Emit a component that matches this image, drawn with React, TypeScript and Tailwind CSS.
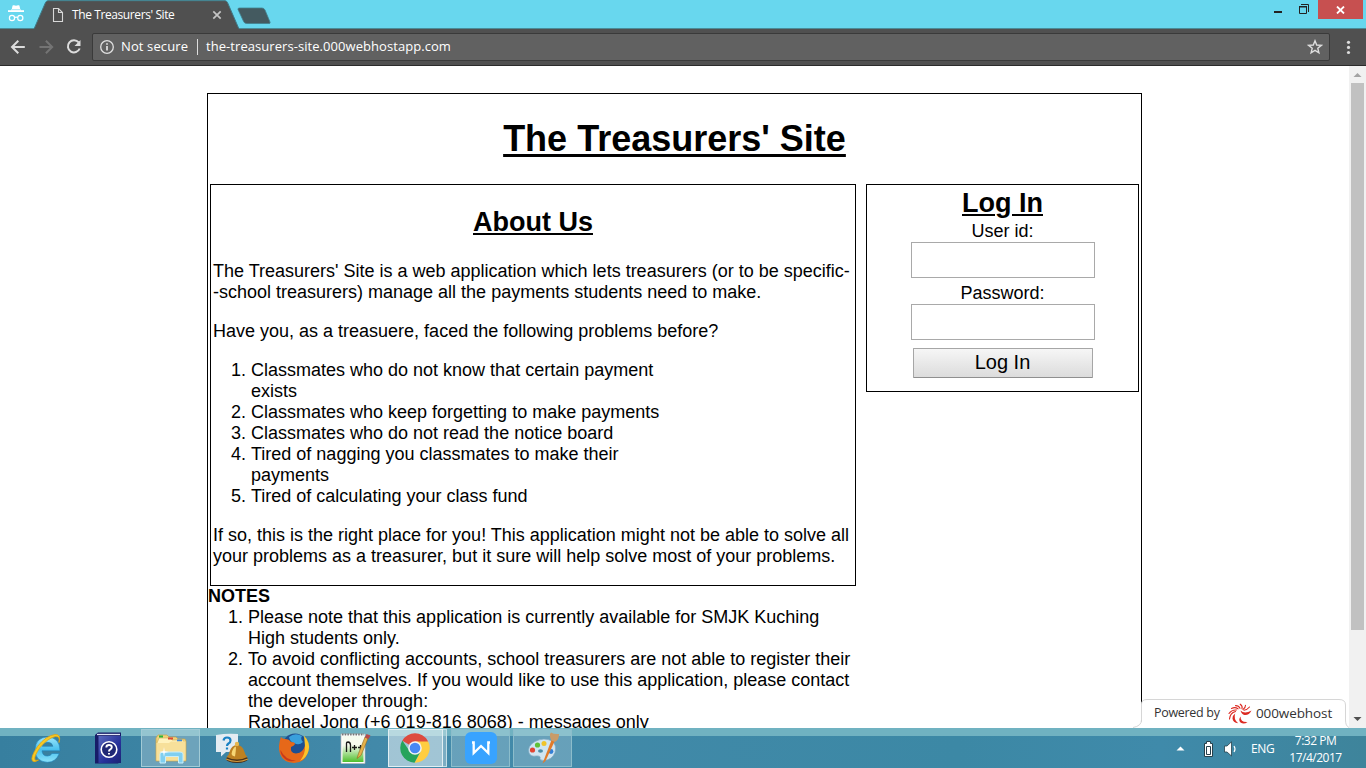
import type { ReactNode } from "react";

function Line({ children, className = "" }: { children: ReactNode; className?: string }) {
  return <span className={`block h-[21px] leading-[21px] whitespace-nowrap ${className}`}>{children}</span>;
}

function Item({ n, lines }: { n: number; lines: string[] }) {
  return (
    <li className="flex">
      <span className="w-[40px] shrink-0 pr-[5px] text-right leading-[21px]">{n}.</span>
      <div>
        {lines.map((l) => (
          <Line key={l}>{l}</Line>
        ))}
      </div>
    </li>
  );
}

function TabStrip() {
  return (
    <div className="relative flex h-[29px] bg-[linear-gradient(to_bottom,#68d7ee_28px,#4a8b98_28px)]">
      <svg className="absolute left-0 top-0" width="290" height="29" viewBox="0 0 290 29">
        <path d="M34 29 L45.500 2.500 Q46.500 .7 48 .7 H225 Q226.500 .7 227.500 2.500 L239 29Z" fill="#505050" stroke="#3f7986" strokeWidth="1" />
        <rect x="34.500" y="28" width="204" height="1" fill="#505050" />
        <path d="M239.500 8 H262 Q264 8 265 10 L270 22 Q270.500 23.500 269 23.500 H246.500 Q244.500 23.500 243.600 21.500 L238 9.500 Q237.500 8 239.500 8Z" fill="#445a60" stroke="#43808d" strokeWidth=".8" />
        <g fill="#fff">
          <path d="M11.800 9 L12.600 5.600 Q13 5 14 5.300 Q16 6.100 18 5.300 Q19 5 19.400 5.600 L20.200 9Z" />
          <path d="M8 10.200 H24 V12 H8Z" />
          <path d="M11 9.500h10v1H11z" />
        </g>
        <g fill="none" stroke="#fff" strokeWidth="1.200">
          <circle cx="12" cy="18" r="2.600" />
          <circle cx="20.300" cy="18" r="2.600" />
          <path d="M14.600 17.600 Q16.100 16.700 17.700 17.600" />
        </g>
        <path d="M53.500 8.500 H58.500 L62.500 12.500 V21.500 H53.500Z M58.500 8.500 V12.500 H62.500" fill="none" stroke="#d8d8d8" strokeWidth="1.100" />
        <path d="M213.300 11.300 L220.700 18.700 M220.700 11.300 L213.300 18.700" stroke="#c4c4c4" strokeWidth="1.700" />
      </svg>
      <span className="relative ml-[72px] mt-[6px] w-[110px] whitespace-nowrap font-['Open_Sans','Noto_Sans',sans-serif] text-[12px] leading-[18px] tracking-[-0.4px] text-white">
        The Treasurers' Site
      </span>
      <div className="ml-auto flex">
        <svg width="54" height="19" viewBox="0 0 54 19" className="shrink-0">
          <rect x="10" y="11" width="8" height="2" fill="#222" />
          <path d="M35.500 6.500 H42.500 V13.500 H35.500Z" fill="none" stroke="#222" />
          <path d="M35 6h8v1.500h-8z" fill="#222" />
          <path d="M37 4.500 H44.500 V12" fill="none" stroke="#222" />
        </svg>
        <div className="flex h-[19px] w-[45px] items-center justify-center bg-[#c75050]">
          <svg width="9" height="8" viewBox="0 0 9 8">
            <path d="M1 .5 L8 7.500 M8 .5 L1 7.500" stroke="#fff" strokeWidth="1.800" />
          </svg>
        </div>
        <div className="w-[3px]" />
      </div>
    </div>
  );
}

function Toolbar() {
  return (
    <div className="flex h-[37px] items-start border-b border-[#2b2b2b] bg-[#505050] pt-[4px] font-['Open_Sans','Noto_Sans',sans-serif] text-[13px] text-white">
      <svg width="92" height="28" viewBox="0 0 92 28" className="shrink-0" fill="none" strokeWidth="2">
        <path d="M24.800 14 H12.500 M18.300 7.700 L12 14 L18.300 20.300" stroke="#dcdcdc" />
        <path d="M39.500 14 H52 M45.900 7.700 L52.200 14 L45.900 20.300" stroke="#747474" />
        <path d="M78.700 9.400 A6.100 6.100 0 1 0 79.700 15.500" stroke="#dcdcdc" />
        <path d="M80.500 7 V13 H74.500Z" fill="#dcdcdc" />
      </svg>
      <div className="flex h-[28px] w-[1238px] items-center rounded-[2px] border border-[#3a3a3a] bg-[#616161]">
        <svg width="27" height="26" viewBox="0 0 27 26" className="shrink-0" fill="none">
          <circle cx="14" cy="13" r="6.300" stroke="#e0e0e0" strokeWidth="1.300" />
          <path d="M14 12 V16.500 M14 9.200 V10.700" stroke="#f2f2f2" strokeWidth="1.500" />
        </svg>
        <span className="ml-[1px] w-[76px] whitespace-nowrap tracking-[0.12px]">Not secure</span>
        <span className="h-[16px] w-px bg-[#ddd]" />
        <span className="ml-[8px] whitespace-nowrap tracking-[0.06px]">the-treasurers-site.000webhostapp.com</span>
        <svg width="16" height="16" viewBox="0 0 16 16" className="ml-auto mr-[6px]" fill="none">
          <path d="M8 1.800 L9.700 6 L14.300 6.400 L10.800 9.300 L11.900 13.800 L8 11.400 L4.100 13.800 L5.200 9.300 L1.700 6.400 L6.300 6Z" stroke="#dedede" strokeWidth="1.400" />
        </svg>
      </div>
      <svg width="36" height="28" viewBox="0 0 36 28" fill="#dcdcdc" className="shrink-0">
        <circle cx="18.500" cy="9.300" r="1.600" />
        <circle cx="18.500" cy="14.400" r="1.600" />
        <circle cx="18.500" cy="19.500" r="1.600" />
      </svg>
    </div>
  );
}

function Login() {
  return (
    <section className="flex h-[208px] w-[273px] flex-col items-center border border-black pt-[3px]">
      <h2 className="h-[33px] text-[27px] font-bold leading-[31px] underline decoration-[2px] underline-offset-[2px]">Log In</h2>
      <Line>User id:</Line>
      <input aria-label="User id" className="h-[36px] w-[184px] border border-[#a9a9a9] bg-white" />
      <Line className="mt-[5px]">Password:</Line>
      <input type="password" aria-label="Password" className="h-[36px] w-[184px] border border-[#a9a9a9] bg-white" />
      <button className="mt-[8px] h-[30px] w-[180px] rounded-[1px] border border-[#a6a6a6] border-b-[#8f8f8f] bg-linear-to-b from-[#f6f6f6] to-[#dcdcdc] pb-[2px] text-[20px] leading-[26px]">
        Log In
      </button>
    </section>
  );
}

function Site() {
  return (
    <div className="ml-[207px] mt-[27px] h-[700px] w-[935px] shrink-0 border border-black text-[18px] text-black">
      <h1 className="mt-[24px] h-[41px] text-center text-[36px] font-bold leading-[41px] underline decoration-[3px] underline-offset-[3px]">
        The Treasurers' Site
      </h1>
      <div className="mt-[25px] flex items-start gap-[10px] pl-[2px]">
        <section className="h-[402px] w-[646px] border border-black pl-[2px]">
          <h2 className="ml-[-2px] mt-[22px] h-[31px] text-center text-[27px] font-bold leading-[31px] underline decoration-[2px] underline-offset-[2px]">
            About Us
          </h2>
          <div className="mt-[23px]">
            <Line>The Treasurers' Site is a web application which lets treasurers (or to be specific-</Line>
            <Line>-school treasurers) manage all the payments students need to make.</Line>
          </div>
          <Line className="mt-[18px]">Have you, as a treasuere, faced the following problems before?</Line>
          <ol className="ml-[-2px] mt-[18px]">
            <Item n={1} lines={["Classmates who do not know that certain payment", "exists"]} />
            <Item n={2} lines={["Classmates who keep forgetting to make payments"]} />
            <Item n={3} lines={["Classmates who do not read the notice board"]} />
            <Item n={4} lines={["Tired of nagging you classmates to make their", "payments"]} />
            <Item n={5} lines={["Tired of calculating your class fund"]} />
          </ol>
          <div className="mt-[18px]">
            <Line>If so, this is the right place for you! This application might not be able to solve all</Line>
            <Line>your problems as a treasurer, but it sure will help solve most of your problems.</Line>
          </div>
        </section>
        <Login />
      </div>
      <Line className="font-bold">NOTES</Line>
      <ol>
        <Item n={1} lines={["Please note that this application is currently available for SMJK Kuching", "High students only."]} />
        <Item
          n={2}
          lines={[
            "To avoid conflicting accounts, school treasurers are not able to register their",
            "account themselves. If you would like to use this application, please contact",
            "the developer through:",
            "Raphael Jong (+6 019-816 8068) - messages only",
          ]}
        />
      </ol>
    </div>
  );
}

function PoweredBy() {
  return (
    <div className="absolute bottom-0 left-[1130px] flex h-[30px] w-[227px] items-center pl-[24px] pt-[1px] font-['Open_Sans','Noto_Sans',sans-serif] text-[#333]">
      <svg className="absolute left-0 top-0" width="219" height="30" viewBox="0 0 219 30">
        <path d="M0 30 Q11.500 29.500 11.500 22 V6 Q11.500 1.500 17 1.500 H209 Q215.500 1.500 215.500 7 V22 Q215.500 28 219 29.500 V30Z" fill="#fff" />
        <path d="M3 29.500 Q11.500 28 11.500 22 V6 Q11.500 1.500 17 1.500 H209 Q215.500 1.500 215.500 7 V22 Q215.500 28 219 29.500" fill="none" stroke="#d6d6d6" />
      </svg>
      <span className="relative w-[74px] whitespace-nowrap text-[12.5px] tracking-[-0.3px]">Powered by</span>
      <svg className="relative shrink-0" width="24" height="22" viewBox="0 0 24 22" fill="#dc2a22">
        <path d="M12.500 7.500 Q16.500 11.500 23.500 7.500 Q21 12.500 16.500 12 Q13.500 11.300 12.500 7.500Z" />
        <path d="M10 11.500 Q10 17.500 17 17 Q13.500 19.800 10 17.500 Q7.500 15 10 11.500Z" transform="translate(2.500 2)" />
        <path d="M7.200 10.500 Q5.200 16.500 10.200 20.300 Q4.800 19.500 4.500 15.500 Q4.600 12.300 7.200 10.500Z" />
        <g fill="none" stroke="#dc2a22" strokeWidth="1.100" strokeLinecap="round">
          <path d="M7.500 8.500 Q2 10 1.500 16" />
          <path d="M8.500 7 Q4 6.500 1 10.500" />
          <path d="M10 5.800 Q7 3.500 3.500 5.500" />
          <path d="M12 5.300 Q10.800 2.500 7.500 2.600" />
          <path d="M14 5.600 Q14.800 3 12.200 1.200" />
          <path d="M16 7.200 Q19 7 21.500 4" />
          <path d="M15 6.400 Q17.500 5 17.500 2.300" />
        </g>
      </svg>
      <span className="relative ml-[4px] whitespace-nowrap text-[13.5px] tracking-[-0.1px]">000webhost</span>
    </div>
  );
}

function Scrollbar() {
  return (
    <div className="absolute right-0 top-0 flex h-full w-[17px] flex-col items-center bg-[#f1f1f1]">
      <svg width="17" height="17" viewBox="0 0 17 17" className="shrink-0">
        <path d="M4.500 11 H12.500 L8.500 7Z" fill="#a3a3a3" />
      </svg>
      <div className="h-[547px] w-[13px] bg-[#c1c1c1]" />
      <svg width="17" height="17" viewBox="0 0 17 17" className="mt-auto shrink-0">
        <path d="M4.500 6 H12.500 L8.500 10Z" fill="#505050" />
      </svg>
    </div>
  );
}

function IeIcon() {
  return (
    <svg width="34" height="32" viewBox="0 0 34 32">
      <defs>
        <linearGradient id="ie" x1="0" y1="0" x2="0" y2="1">
          <stop offset="0" stopColor="#9be6fb" />
          <stop offset=".5" stopColor="#49c0ee" />
          <stop offset="1" stopColor="#8be2fa" />
        </linearGradient>
      </defs>
      <path d="M31 18.800 H13 Q13.500 24 18.300 24 Q21.500 24 23 21.500 H30.300 Q27 30.300 18.300 30.300 Q6 29.500 6 17.500 Q6.500 5.500 18.500 5 Q31 5.500 31 18.800Z M13.200 14.300 H23.900 Q23 10.300 18.700 10.300 Q14.100 10.300 13.200 14.300Z" fill="url(#ie)" fillRule="evenodd" stroke="#1d7fb8" strokeWidth=".6" />
      <path d="M30 10.500 Q32.500 2 26 2.500 Q17 3.500 8.500 14.500 Q1 25.500 3.500 29 Q5.500 31 9.500 28 Q6.500 29 5.800 27.500 Q5 24 11 15.500 Q19 6 26.500 4.500 Q31.500 4.300 30 10.500Z" fill="#f8c924" stroke="#e0a512" strokeWidth=".8" />
    </svg>
  );
}

function HelpBookIcon() {
  return (
    <svg width="28" height="32" viewBox="0 0 28 32">
      <defs>
        <linearGradient id="book" x1="0" y1="0" x2="1" y2="1">
          <stop offset="0" stopColor="#5868bd" />
          <stop offset=".6" stopColor="#263099" />
          <stop offset="1" stopColor="#1d2374" />
        </linearGradient>
      </defs>
      <path d="M1 3 L4 .5 H27 V29 L24 31.500 H1Z" fill="#171c68" />
      <path d="M4.500 4 H27 V31 H4.500Z" fill="url(#book)" />
      <path d="M3 2.500 H26" stroke="#dfe4f5" strokeWidth="1.300" />
      <circle cx="15" cy="17.500" r="7.800" fill="#202875" stroke="#fff" strokeWidth="1.600" />
      <path d="M12.300 15.500 Q12.300 13 15 13 Q17.800 13 17.800 15.300 Q17.800 16.700 16 17.600 Q15 18.200 15 19.500 M15 21 V22.500" fill="none" stroke="#fff" strokeWidth="1.900" />
    </svg>
  );
}

function FolderIcon() {
  return (
    <svg width="34" height="32" viewBox="0 0 34 32">
      <path d="M2 29 V6 L4 3 H13 L15 5 H22 L24 7 H31 L32 9 V29Z" fill="#efd27c" stroke="#c8a34b" strokeWidth=".7" />
      <path d="M3 11 L5 6 H16 L18 8 H29 L31 12" fill="#fff2bd" stroke="#d5b65c" strokeWidth=".7" />
      <path d="M5 3.500h4v2H5z" fill="#28b43b" />
      <path d="M14 5.500h5v2h-5z" fill="#db4931" />
      <path d="M23 7.500h5v2h-5z" fill="#3b8ade" />
      <path d="M2.500 11 H15 L17 9.500 H31.500 V28.500 H2.500Z" fill="#f7e09a" />
      <path d="M6 31 V22 Q6 20 9 20 H26 Q29 20 29 22 V31 H24.500 V24.500 H11.500 V31Z" fill="#80cff0" stroke="#c9effb" strokeWidth="1" />
      <path d="M10 15 L10.700 19.300 L15 20 L10.700 20.700 L10 25 L9.300 20.700 L5 20 L9.300 19.300Z" fill="#fff" />
    </svg>
  );
}

function BellIcon() {
  return (
    <svg width="34" height="32" viewBox="0 0 34 32">
      <path d="M1 3 Q12 1 23 2 V18.500 Q15 20 11 20 L6 24.500 V20 H1Z" fill="#e4ecf2" />
      <path d="M8.500 8.500 Q9 5.500 12 5.500 Q15.500 5.500 15.500 8.500 Q15.500 10.500 13.500 11.500 Q12 12.500 12 14 M12 15.500 V17.500" fill="none" stroke="#1881c4" strokeWidth="2.200" />
      <ellipse cx="22" cy="27" rx="11" ry="4" fill="#47301a" />
      <path d="M11.500 25 Q13.500 24 14.500 20 Q16.500 13 22 13 Q27.500 13 29.500 20 Q30.500 24 32.500 25 Q22 30 11.500 25Z" fill="#bd8122" />
      <path d="M16.500 22 Q17.500 15.500 21 14.500 Q21 19 20 24.500 Q17 24 16.500 22Z" fill="#f7d675" />
      <circle cx="22" cy="12" r="2.200" fill="#e7b64f" />
      <path d="M11 27 Q22 32 33 27" fill="none" stroke="#d39a3d" strokeWidth="1.200" />
    </svg>
  );
}

function FirefoxIcon() {
  return (
    <svg width="34" height="32" viewBox="0 0 34 32">
      <circle cx="18" cy="14" r="12.500" fill="#1d4f91" />
      <path d="M12 5 Q18 0 25 4 Q23 7 26 10 Q22 14 17 11 Q13 10 12 5Z" fill="#3aa0dc" />
      <path d="M4 5 Q5 7 8 7 Q12 7 14 10 Q18 10 18 12 Q17 14 14 15 Q13 21 19 21.500 Q23 21 25 19 Q29 15 28 8 Q33 13 31 20 Q28 31 17 31 Q6 30.500 3 22 Q.5 14 4 5Z" fill="#e66819" />
      <path d="M27 3.500 Q34 11 31.500 19 Q29.500 26 23 29 Q28.500 22 28 14Z" fill="#fbc42a" />
      <path d="M3.500 18 Q8 28 19 28.500 Q11 31 6 25 Q3 21 3.500 18Z" fill="#c93a1a" />
    </svg>
  );
}

function NotepadIcon() {
  return (
    <svg width="34" height="32" viewBox="0 0 34 32">
      <defs>
        <linearGradient id="np" x1="0" y1="0" x2="0" y2="1">
          <stop offset=".35" stopColor="#f7fbef" />
          <stop offset="1" stopColor="#4fbf2c" />
        </linearGradient>
      </defs>
      <path d="M2 2 H26 V31.500 H2Z" fill="#fff" stroke="#b5b5b5" strokeWidth=".7" />
      <path d="M3.500 4 H24.500 V30 H3.500Z" fill="url(#np)" />
      <path d="M3 2.500 H25" stroke="#777" strokeWidth="2" strokeDasharray="1.500 1.200" />
      <path d="M7.500 20 V11 Q7.500 10 9 10 Q11.500 10.300 11.500 13 V20 M13 15.500 H18 M15.500 13 V18 M19 15.500 H24 M21.500 13 V18" fill="none" stroke="#191919" strokeWidth="1.300" />
      <path d="M18 26.500 L19.500 21.500 L26 5 L29 6.500 L22 23.500Z" fill="#e5b24a" stroke="#8b6620" strokeWidth=".6" />
      <path d="M26 5.500 L27.500 2 L31.500 3.500 L29.500 7Z" fill="#b84a4a" />
    </svg>
  );
}

function ChromeIcon() {
  return (
    <svg width="30" height="30" viewBox="0 0 30 30" className="ml-[-2px]">
      <path d="M15 15 L2.300 7.650 A14.700 14.700 0 0 1 27.700 7.650 L28 9 H15Z" fill="#dd4b3e" />
      <path d="M15 8.500 H28.200 A14.700 14.700 0 0 1 14.500 29.700 L20.700 18.200Z" fill="#ffcd41" />
      <path d="M2.300 7.500 L9.500 18 L20.500 18.500 L14.500 29.700 A14.700 14.700 0 0 1 2.300 7.500Z" fill="#25a45b" />
      <circle cx="15" cy="15" r="6.800" fill="#f3f3f3" />
      <circle cx="15" cy="15" r="5.300" fill="#4788f4" />
    </svg>
  );
}

function WpsIcon() {
  return (
    <svg width="32" height="32" viewBox="0 0 32 32">
      <rect width="32" height="32" rx="6" fill="#38a3ff" />
      <path d="M7 10.500 H8.700 V21 L16 14 L23.300 21 V10.500 H25" fill="none" stroke="#fff" strokeWidth="2.300" />
    </svg>
  );
}

function PaintIcon() {
  return (
    <svg width="34" height="32" viewBox="0 0 34 32">
      <path d="M3 21 Q1 14 9 9.500 Q18 5 26 9 Q31 13 29 20.500 Q26 28 18 28.500 Q14 28.500 14 26.500 Q15 23.500 10 24 Q5 25 3 21Z" fill="#cfe5f2" stroke="#7fa8c2" strokeWidth=".7" />
      <circle cx="6.500" cy="18" r="2.600" fill="#e24533" />
      <circle cx="11.500" cy="13" r="2.600" fill="#60c137" />
      <circle cx="18" cy="11.500" r="2.500" fill="#f0c42b" />
      <circle cx="25" cy="19.500" r="2.400" fill="#327fd6" />
      <ellipse cx="14.500" cy="19" rx="2.500" ry="1.800" fill="#4c8da9" />
      <path d="M16.500 31.500 L25.500 8 L28.500 9.500 L19.500 29Z" fill="#e17b2a" />
      <path d="M25.500 8.500 Q22.500 3 25 .5 Q28 2.500 33 2 Q33.500 7 29 10Z" fill="#c99b68" />
    </svg>
  );
}

function Taskbar() {
  const pinned = "flex shrink-0 items-center justify-center h-[38px] mt-[1px]";
  return (
    <div className="flex h-[40px] bg-[linear-gradient(to_bottom,#70b2c1_0,#70b2c1_8px,transparent_8px),linear-gradient(90deg,#377f9f,#438aaa_30%,#3c88a5_70%,#3f8aaa_85%,#3e849b)]">
      <div className={`${pinned} ml-[29px] w-[34px]`}><IeIcon /></div>
      <div className={`${pinned} ml-[31px] w-[28px]`}><HelpBookIcon /></div>
      <div className={`${pinned} ml-[19px] w-[59px] border border-[#a2cbd6] bg-white/25`}><FolderIcon /></div>
      <div className={`${pinned} ml-[15px] w-[34px]`}><BellIcon /></div>
      <div className={`${pinned} ml-[28px] w-[34px]`}><FirefoxIcon /></div>
      <div className={`${pinned} ml-[28px] w-[34px]`}><NotepadIcon /></div>
      <div className={`${pinned} ml-[15px] w-[55px] border border-[#e2eff3] bg-white/50`}><ChromeIcon /></div>
      <div className={`${pinned} w-[4px] border border-l-0 border-[#c5dfe6] bg-white/30`} />
      <div className={`${pinned} ml-[4px] w-[59px] border border-[#8cbdcb] bg-white/20`}><WpsIcon /></div>
      <div className={`${pinned} ml-[3px] w-[59px] border border-[#8cbdcb] bg-white/20`}><PaintIcon /></div>
      <div className="ml-auto flex items-center pt-[1px] font-['Open_Sans','Noto_Sans',sans-serif] text-[12px] text-white">
        <svg width="66" height="20" viewBox="0 0 66 20" className="mt-[1px]">
          <path d="M4.500 11.500 L8.500 7.500 L12.500 11.500Z" fill="#fff" />
          <path d="M32.500 4.500 H34.500 V2.500 H38.500 V4.500 H40.500 V17.500 H32.500Z" fill="#fff" stroke="#26404a" />
          <path d="M34.500 7.500 H38.500 V15.500 H34.500Z" fill="#fff" stroke="#26404a" />
          <path d="M52.500 7 H55 L59.500 2.800 V17 L55 13 H52.500Z" fill="#fff" stroke="#26404a" strokeWidth=".8" />
          <path d="M62 7 Q64 10 62 13" fill="none" stroke="#fff" strokeWidth="1.200" />
        </svg>
        <span className="ml-[13px] w-[24px] whitespace-nowrap tracking-[-0.3px]">ENG</span>
        <div className="ml-[13px] mr-[23px] w-[55px] text-center leading-[17px] tracking-[-0.5px] whitespace-nowrap">
          <div>7:32 PM</div>
          <div>17/4/2017</div>
        </div>
      </div>
    </div>
  );
}

export default function App() {
  return (
    <div className="flex h-[768px] w-[1366px] flex-col overflow-hidden bg-white font-['Liberation_Sans',Arial,sans-serif]">
      <TabStrip />
      <Toolbar />
      <main className="relative flex h-[662px] flex-col overflow-hidden">
        <Site />
        <PoweredBy />
        <Scrollbar />
      </main>
      <Taskbar />
    </div>
  );
}
